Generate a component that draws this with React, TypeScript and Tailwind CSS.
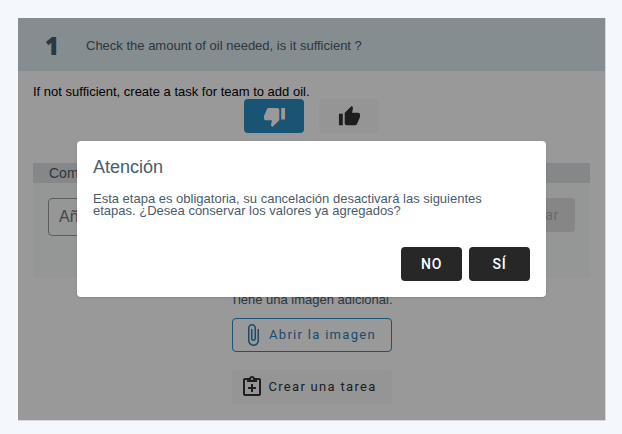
import type { ReactNode } from 'react'
import { MdAttachFile, MdThumbDown, MdThumbUp } from 'react-icons/md'

function ClipboardPlusIcon() {
  return (
    <svg viewBox="0 0 24 24" className="h-6 w-6 shrink-0" fill="currentColor" aria-hidden="true">
      <path
        fillRule="evenodd"
        d="M19 3h-4.18C14.4 1.84 13.3 1 12 1s-2.4.84-2.82 2H5c-1.1 0-2 .9-2 2v14c0 1.1.9 2 2 2h14c1.1 0 2-.9 2-2V5c0-1.1-.9-2-2-2Zm-7 0c.55 0 1 .45 1 1s-.45 1-1 1-1-.45-1-1 .45-1 1-1ZM7 7h10V5h2v14H5V5h2v2Z"
      />
      <path d="M11 9h2v3h3v2h-3v3h-2v-3H8v-2h3V9Z" />
    </svg>
  )
}

function DialogButton({ children }: { children: ReactNode }) {
  return (
    <button
      type="button"
      className="h-[34px] w-[61px] rounded bg-[#272727] font-['Roboto',sans-serif] text-sm font-medium tracking-wider text-white"
    >
      {children}
    </button>
  )
}

function ConfirmDialog() {
  return (
    <div className="absolute inset-0 flex items-center justify-center bg-black/40 px-[59px]">
      <div
        role="dialog"
        aria-modal="true"
        aria-labelledby="dialog-title"
        className="w-full max-w-xl rounded-sm bg-white px-4 pt-3 pb-4 text-[#4a5c6b] shadow-sm"
      >
        <h2 id="dialog-title" className="text-lg leading-7">
          Atención
        </h2>
        <p className="mt-3 pr-4 text-[13px] leading-3">
          Esta etapa es obligatoria, su cancelación desactivará las siguientes etapas. ¿Desea conservar los valores ya
          agregados?
        </p>
        <div className="mt-[30px] flex justify-end gap-[7px]">
          <DialogButton>NO</DialogButton>
          <DialogButton>SÍ</DialogButton>
        </div>
      </div>
    </div>
  )
}

function Comments() {
  return (
    <section className="mt-[30px] h-[115px] bg-[#f9fafb]">
      <h3 className="bg-[#dfe1e4] px-4 text-sm leading-5 text-[#4a5c6b]">Comentarios</h3>
      <div className="flex items-start gap-4 px-[15px] pt-[15px]">
        <input
          type="text"
          aria-label="Añadir comentario"
          placeholder="Añadir comentario"
          className="h-[38px] min-w-0 flex-1 rounded border border-[#9a9a9a] px-2.5 text-base placeholder:text-[#757575]"
        />
        <button
          type="button"
          disabled
          className="h-[34px] rounded bg-[#e0e0e0] px-4 font-['Roboto',sans-serif] text-sm tracking-wider text-[#b0b0b0]"
        >
          Enviar
        </button>
      </div>
    </section>
  )
}

export default function App() {
  return (
    <div className="min-h-screen bg-[#f4f7fb] pt-[18px] pr-4 pb-3.5 pl-[18px] font-['Liberation_Sans',Arial,sans-serif]">
      <main className="relative border-r border-b border-[#d5d7d9] bg-white">
        <header className="flex h-[53px] items-center bg-[#deebf2] px-[27px] pt-0.5 text-[#4a5c6b]">
          <span className="w-[41px] font-['Open_Sans',sans-serif] text-2xl font-extrabold">1</span>
          <h1 className="text-[13px]">Check the amount of oil needed, is it sufficient ?</h1>
        </header>

        <div className="px-[15px] pt-3.5 pb-4">
          <p className="text-[13px] leading-3.5 text-black">If not sufficient, create a task for team to add oil.</p>

          <div className="flex justify-center gap-[15px]">
            <button
              type="button"
              aria-label="No"
              className="flex h-[34px] w-[60px] items-center justify-center rounded bg-[#2b8cc4] text-white"
            >
              <MdThumbDown className="h-[23px] w-[23px]" />
            </button>
            <button
              type="button"
              aria-label="Sí"
              className="flex h-[34px] w-[60px] items-center justify-center rounded bg-[#f9f9f9] text-[#333333]"
            >
              <MdThumbUp className="h-[23px] w-[23px]" />
            </button>
          </div>

          <Comments />

          <p className="mt-3.5 text-center text-[13px] leading-4 text-[#4a5c6b]">Tiene una imagen adicional.</p>

          <div className="mt-2.5 flex flex-col items-center gap-[18px] font-['Roboto',sans-serif] text-[13px] tracking-widest">
            <button
              type="button"
              className="flex h-[34px] w-40 items-center justify-center gap-1 rounded border border-[#2b8cc4] pr-1.5 text-[#2b7fb0]"
            >
              <MdAttachFile className="h-6 w-6 shrink-0" />
              Abrir la imagen
            </button>
            <button
              type="button"
              className="flex h-[34px] w-40 items-center justify-center gap-1 rounded bg-[#f9f9f9] pr-1.5 text-[#333333]"
            >
              <ClipboardPlusIcon />
              Crear una tarea
            </button>
          </div>
        </div>

        <ConfirmDialog />
      </main>
    </div>
  )
}
